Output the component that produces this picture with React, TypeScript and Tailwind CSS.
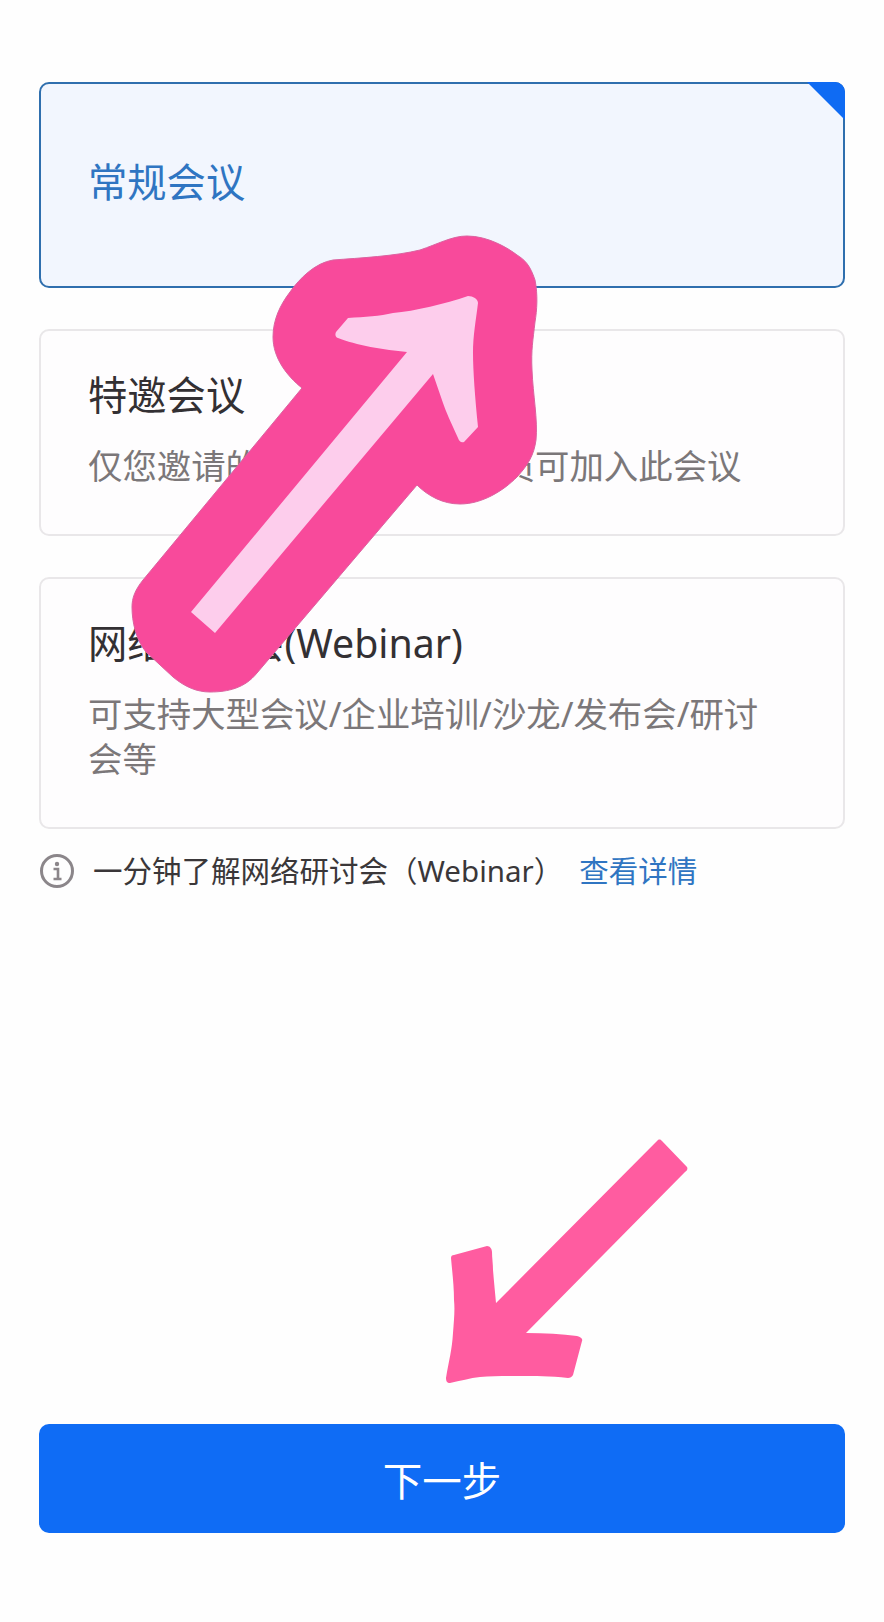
function InfoIcon() {
  return (
    <svg width="36" height="36" viewBox="0 0 36 36" fill="none" className="shrink-0">
      <circle cx="18" cy="18" r="15.5" stroke="#8b868a" strokeWidth="3" />
      <circle cx="18" cy="11" r="2.2" fill="#8b868a" />
      <path d="M14.5 16h4.5v9.5M14.5 26h8" stroke="#8b868a" strokeWidth="2.6" />
    </svg>
  );
}

function Card({ title, desc }: { title: string; desc: string }) {
  return (
    <div className="rounded-[10px] border-2 border-[#e9e7e9] bg-[#fefdfe] pt-[41px] pr-[56px] pb-[46px] pl-[47px]">
      <h2 className="text-[39.3px] font-normal leading-[46px] text-[#333033]">{title}</h2>
      <p className="mt-[25px] text-[34.4px] leading-[45px] text-[#7b7779]">{desc}</p>
    </div>
  );
}

export default function App() {
  return (
    <main className="relative flex h-[1622px] w-[884px] flex-col overflow-hidden bg-[#fefefe] px-[39px] pt-[82px] pb-[89px] font-['Noto_Sans','Noto_Sans_CJK_SC',sans-serif]">
      <div className="relative flex h-[206px] items-center rounded-[10px] border-2 border-[#2f6fae] bg-[#f2f6fe] px-[47px] pb-[6px]">
        <span className="text-[39.3px] leading-[46px] text-[#2f75c2]">常规会议</span>
        <div className="absolute -top-[2px] -right-[2px] h-[38px] w-[38px] rounded-tr-[10px] bg-[#0f6bf3] [clip-path:polygon(0_0,100%_0,100%_100%)]" />
      </div>

      <div className="mt-[41px] flex flex-col gap-[41px]">
        <Card title="特邀会议" desc="仅您邀请的联系人和企业成员可加入此会议" />
        <Card title="网络研讨会(Webinar)" desc="可支持大型会议/企业培训/沙龙/发布会/研讨会等" />
      </div>

      <div className="mt-[24px] flex items-center text-[29.5px] leading-[36px] text-[#3a3739]">
        <InfoIcon />
        <span className="ml-[18px]">一分钟了解网络研讨会（Webinar）</span>
        <span className="ml-[16px] text-[#2f75c2]">查看详情</span>
      </div>

      <button className="mt-auto flex h-[109px] w-full items-center justify-center rounded-[10px] bg-[#0f6cf5] pt-[6px] text-[39.5px] text-white">
        下一步
      </button>

      <svg className="pointer-events-none absolute inset-0" width="884" height="1622" viewBox="0 0 884 1622" fill="none">
        <path
          d="M467 236C452 236 438 244 420 250C396 256 360 258 333 260C315 263 300 278 290 292C280 305 273 320 273 337C273 358 287 376 302 388L143 580C135 590 132 598 132 607C132 622 136 640 146 652L173 677C185 687 197 692 210 692C228 692 245 688 257 673L417 485C428 496 443 504 460 504C482 504 503 491 517 477C528 465 534 455 536 440C538 420 533 395 532 370C531 350 533 340 535 322C537 310 538 295 535 280C530 265 525 260 517 255C508 248 488 236 467 236Z"
          fill="#f84a9b"
          stroke="#dc62a0"
        />
        <path
          d="M468 296C473 296 478 299 478 303C476 320 473 335 473 353C473 370 475 397 478 427L464 442C461 443 459 441 458 438C450 420 446 412 443 403L433 374L215 633L191 612L407 352C385 350 355 345 338 338C335 337 335 334 336 332L348 318C365 317 380 316 393 313C415 311 445 304 468 296Z"
          fill="#fdcdec"
        />
        <path
          d="M658 1140C660 1139 661 1140 662 1141L687 1167C688 1169 687 1171 685 1172L526 1333C545 1333 562 1334 577 1336C581 1337 583 1339 582 1341L573 1375C572 1377 570 1378 568 1378C550 1376 535 1376 520 1376C505 1376 492 1376 480 1377C470 1378 460 1381 450 1383C447 1383 446 1381 446 1378C449 1360 452 1350 453 1333C454 1320 455 1310 454 1300C454 1285 452 1270 451 1258C451 1256 452 1255 454 1255L487 1246C490 1246 492 1249 492 1252C492 1258 493 1264 493 1270C494 1282 495 1292 496 1303Z"
          fill="#ff5ca0"
        />
      </svg>
    </main>
  );
}
